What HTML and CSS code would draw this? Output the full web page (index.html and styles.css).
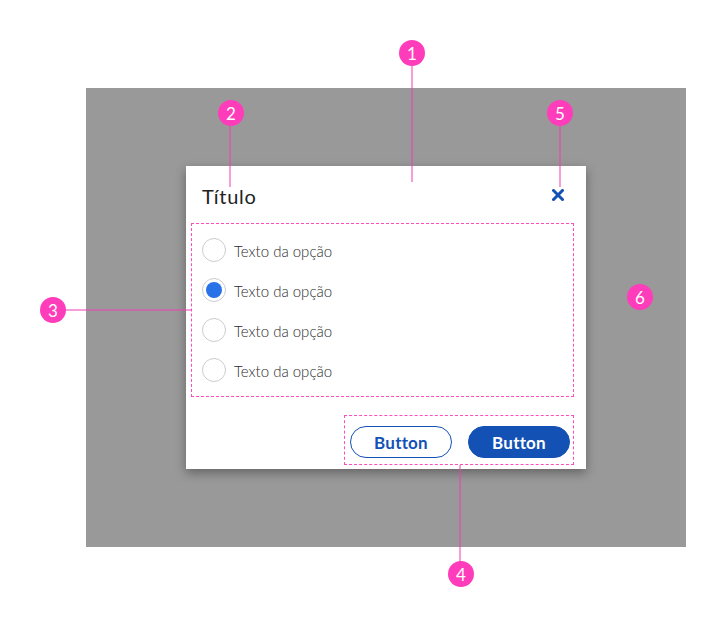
FILE: index.html
```html
<!DOCTYPE html>
<html lang="pt">
<head>
<meta charset="utf-8">
<title>Modal</title>
<link rel="stylesheet" href="styles.css">
</head>
<body>
<div class="canvas">
  <div class="overlay">
    <div class="dialog">
      <div class="dialog-header">
        <h2 class="dialog-title">Título</h2>
        <button class="close" aria-label="Fechar">
          <svg width="12" height="12" viewBox="0 0 12 12"><path d="M1.5 1.5 L10.5 10.5 M10.5 1.5 L1.5 10.5" stroke="#1351b4" stroke-width="3" stroke-linecap="square" fill="none"/></svg>
        </button>
      </div>
      <div class="dialog-body">
        <label class="option"><span class="radio"></span><span class="option-text">Texto da opção</span></label>
        <label class="option"><span class="radio checked"></span><span class="option-text">Texto da opção</span></label>
        <label class="option"><span class="radio"></span><span class="option-text">Texto da opção</span></label>
        <label class="option"><span class="radio"></span><span class="option-text">Texto da opção</span></label>
      </div>
      <div class="dialog-footer">
        <button class="btn btn-secondary">Button</button>
        <button class="btn btn-primary">Button</button>
      </div>
    </div>
  </div>

  <div class="dash dash-body"></div>
  <div class="dash dash-footer"></div>

  <div class="line line-1"></div>
  <div class="line line-2"></div>
  <div class="line line-5"></div>
  <div class="line line-3"></div>
  <div class="line line-4"></div>

  <div class="marker m1">1</div>
  <div class="marker m2">2</div>
  <div class="marker m3">3</div>
  <div class="marker m4">4</div>
  <div class="marker m5">5</div>
  <div class="marker m6">6</div>
</div>
</body>
</html>
```
FILE: styles.css
```css
* { box-sizing: border-box; }
html, body { margin: 0; padding: 0; background: #fff; }
body { font-family: "Lato", "Noto Sans", sans-serif; }

.canvas {
  position: relative;
  width: 726px;
  height: 627px;
  padding-top: 88px;
  padding-left: 86px;
}

.overlay {
  width: 600px;
  height: 459px;
  background: #999999;
  display: flex;
  align-items: center;
  justify-content: center;
}

.dialog {
  width: 400px;
  height: 303px;
  background: #fff;
  box-shadow: 0 4px 10px rgba(0, 0, 0, 0.35);
  display: flex;
  flex-direction: column;
  padding: 0 16px;
}

.dialog-header {
  height: 56px;
  display: flex;
  align-items: center;
  justify-content: space-between;
  padding-top: 3px;
}

.dialog-title {
  margin: 0;
  font-size: 20px;
  font-weight: 400;
  color: #222;
  letter-spacing: 0.7px;
}

.close {
  border: 0;
  background: none;
  padding: 0;
  width: 12px;
  height: 12px;
  margin-right: 6px;
  margin-top: -2px;
  display: flex;
}

.dialog-body {
  padding: 8px 0;
  display: flex;
  flex-direction: column;
}

.option {
  height: 40px;
  display: flex;
  align-items: center;
  gap: 8px;
}

.radio {
  width: 24px;
  height: 24px;
  border: 1px solid #cccccc;
  border-radius: 50%;
  display: flex;
  align-items: center;
  justify-content: center;
  flex: none;
}

.radio.checked::after {
  content: "";
  width: 16px;
  height: 16px;
  border-radius: 50%;
  background: #2a72e8;
}

.option-text {
  font-size: 15px;
  font-weight: 300;
  color: #2b2b2b;
  padding-top: 2px;
}

.dialog-footer {
  display: flex;
  justify-content: flex-end;
  gap: 16px;
  padding-top: 28px;
}

.btn {
  width: 102px;
  height: 32px;
  border-radius: 16px;
  font-family: "Lato", "Noto Sans", sans-serif;
  font-size: 17px;
  font-weight: 700;
  letter-spacing: 0.2px;
  padding: 0;
}

.btn-secondary {
  background: #fff;
  border: 1px solid #1351b4;
  color: #1351b4;
}

.btn-primary {
  background: #1351b4;
  border: 1px solid #1351b4;
  color: #fff;
}

/* annotations */
.dash {
  position: absolute;
  border: 1px dashed #ff4dc0;
}
.dash-body { left: 191px; top: 223px; width: 383px; height: 174px; }
.dash-footer { left: 344px; top: 415px; width: 230px; height: 50px; }

.line {
  position: absolute;
  background: rgba(240, 60, 175, 0.5);
}
.line-1 { left: 411px; top: 64px; width: 2px; height: 118px; }
.line-2 { left: 229px; top: 124px; width: 2px; height: 63px; }
.line-5 { left: 559px; top: 124px; width: 2px; height: 63px; }
.line-3 { left: 64px; top: 309px; width: 127px; height: 2px; }
.line-4 { left: 459px; top: 465px; width: 2px; height: 98px; }

.marker {
  position: absolute;
  width: 26px;
  height: 26px;
  border-radius: 50%;
  background: #ff3cba;
  color: #fff;
  font-family: "Lato", "Noto Sans", sans-serif;
  font-size: 17px;
  font-weight: 400;
  display: flex;
  align-items: center;
  justify-content: center;
}
.m1 { left: 399px; top: 40px; }
.m2 { left: 218px; top: 100px; }
.m5 { left: 547px; top: 100px; }
.m3 { left: 40px; top: 297px; }
.m6 { left: 627px; top: 284px; }
.m4 { left: 448px; top: 561px; }
```
